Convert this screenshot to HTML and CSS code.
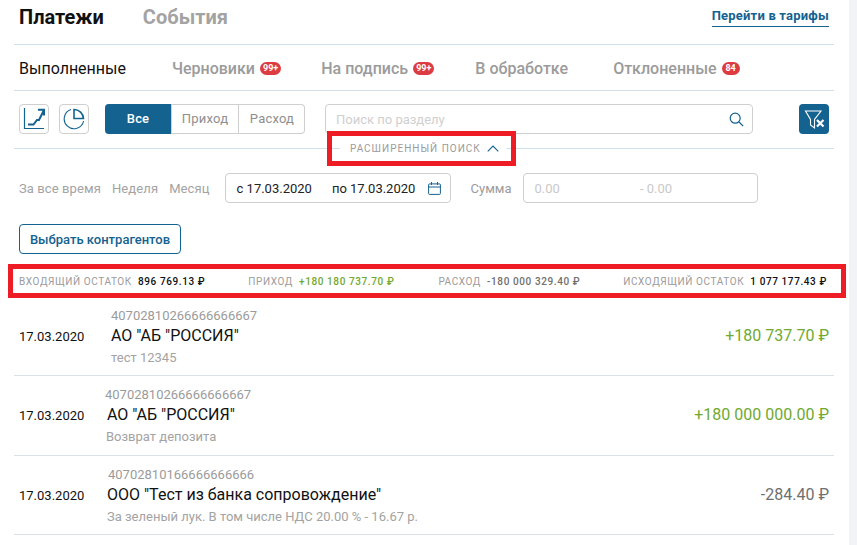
FILE: index.html
```html
<!DOCTYPE html>
<html lang="ru">
<head>
  <meta charset="UTF-8">
  <title>Платежи</title>
  <link rel="stylesheet" href="styles.css">
</head>
<body>
<div class="layout">
<div class="page">

  <div class="head">
    <div class="head-tabs">
      <span class="head-tab active">Платежи</span>
      <span class="head-tab">События</span>
    </div>
    <a class="tariff-link" href="#">Перейти в тарифы</a>
  </div>

  <div class="tabs">
    <span class="tab active">Выполненные</span>
    <span class="tab tab-drafts">Черновики <b class="badge">99+</b></span>
    <span class="tab tab-sign">На подпись <b class="badge">99+</b></span>
    <span class="tab tab-work">В обработке</span>
    <span class="tab tab-rej">Отклоненные <b class="badge">84</b></span>
  </div>

  <div class="toolbar">
    <button class="icon-btn">
      <svg width="24" height="24" viewBox="0 0 24 24" fill="none" stroke="#14628f">
        <path d="M2.5 1V21.5H22" stroke-width="1.2"/>
        <path d="M6 17.5H11.5L15 13H17L22 3" stroke-width="2"/>
        <path d="M16 2.8H22V8.5" stroke-width="2"/>
      </svg>
    </button>
    <button class="icon-btn icon-btn-pie">
      <svg width="22" height="22" viewBox="0 0 22 22" fill="none" stroke="#14628f">
        <path d="M8 1.6A9.8 9.8 0 1 0 20.6 13" stroke-width="1.1"/>
        <path d="M11 1.5V10.5H20.5A9.5 9.5 0 0 0 11 1.5Z" stroke-width="1.6"/>
      </svg>
    </button>
    <div class="switch">
      <span class="switch-item on">Все</span>
      <span class="switch-item">Приход</span>
      <span class="switch-item">Расход</span>
    </div>
    <div class="search">
      <span>Поиск по разделу</span>
      <svg width="15" height="15" viewBox="0 0 15 15" fill="none" stroke="#14628f" stroke-width="1.2">
        <circle cx="6.2" cy="6.2" r="5"/>
        <path d="M10 10L14.2 14.2"/>
      </svg>
    </div>
    <button class="filter-btn">
      <svg width="22" height="24" viewBox="0 0 22 24" fill="none" stroke="#fff">
        <path d="M2.5 4H18L11.5 12.5V21L7.5 18V12.5Z" stroke-width="1.1"/>
        <path d="M14 13L20.5 19.5M20.5 13L14 19.5" stroke-width="2.2"/>
      </svg>
    </button>
  </div>

  <div class="divider">
    <div class="adv-search">
      <div class="adv-inner">
        <span>Расширенный поиск</span>
        <svg width="12" height="7" viewBox="0 0 12 7" fill="none" stroke="#14628f" stroke-width="1.1">
          <path d="M0.7 6.4L6 1L11.3 6.4"/>
        </svg>
      </div>
    </div>
  </div>

  <div class="filters">
    <span class="period">За все время</span>
    <span class="period">Неделя</span>
    <span class="period">Месяц</span>
    <div class="dates">
      <span class="date-from">с 17.03.2020</span>
      <span>по 17.03.2020</span>
      <svg width="13" height="13" viewBox="0 0 13 13" fill="none" stroke="#14628f" stroke-width="1">
        <rect x="0.6" y="1.9" width="11.8" height="10.5" rx="1"/>
        <path d="M0.6 5H12.4M3.5 0V3M9.5 0V3"/>
      </svg>
    </div>
    <span class="sum-label">Сумма</span>
    <div class="sum">
      <span class="sum-from">0.00</span>
      <span>- 0.00</span>
    </div>
  </div>

  <button class="pick-btn">Выбрать контрагентов</button>

  <div class="totals">
    <span class="total t-in">Входящий остаток <b>896 769.13 ₽</b></span>
    <span class="total t-plus">Приход <b class="green">+180 180 737.70 ₽</b></span>
    <span class="total t-minus">Расход <b class="grey">-180 000 329.40 ₽</b></span>
    <span class="total t-out">Исходящий остаток <b>1 077 177.43 ₽</b></span>
  </div>

  <div class="row row-1">
    <span class="row-date">17.03.2020</span>
    <div class="row-info">
      <div class="acc">40702810266666666667</div>
      <div class="name">АО "АБ "РОССИЯ"</div>
      <div class="note">тест 12345</div>
    </div>
    <span class="amount green">+180 737.70 ₽</span>
  </div>

  <div class="row row-2">
    <span class="row-date">17.03.2020</span>
    <div class="row-info">
      <div class="acc">40702810266666666667</div>
      <div class="name">АО "АБ "РОССИЯ"</div>
      <div class="note">Возврат депозита</div>
    </div>
    <span class="amount green">+180 000 000.00 ₽</span>
  </div>

  <div class="row row-3">
    <span class="row-date">17.03.2020</span>
    <div class="row-info">
      <div class="acc">40702810166666666666</div>
      <div class="name">ООО "Тест из банка сопровождение"</div>
      <div class="note">За зеленый лук. В том числе НДС 20.00 % - 16.67 р.</div>
    </div>
    <span class="amount grey">-284.40 ₽</span>
  </div>

</div>
<div class="scrollbar"></div>
</div>
</body>
</html>
```

FILE: styles.css
```css
html, body {
  margin: 0;
  height: 545px;
  overflow: hidden;
  background: #fff;
}
body {
  font-family: Roboto, Arial, sans-serif;
  color: #111;
}
.layout {
  display: flex;
  height: 545px;
}
.page {
  flex: 0 0 820px;
  padding: 0 15px 0 14px;
}
.scrollbar {
  flex: 0 0 8px;
  background: #f1f3f6;
}
button {
  font-family: inherit;
  cursor: pointer;
}

.head {
  height: 44px;
  border-bottom: 1px solid #cfe0ec;
  display: flex;
  justify-content: space-between;
  padding: 0 5px;
}
.head-tabs {
  display: flex;
  gap: 39px;
}
.head-tab {
  font-size: 20px;
  font-weight: 700;
  line-height: 35px;
  color: #a3a3a3;
}
.head-tab.active {
  color: #111;
}
.tariff-link {
  align-self: flex-start;
  margin-top: 8px;
  padding-bottom: 2px;
  font-size: 13px;
  font-weight: 700;
  letter-spacing: 0.2px;
  line-height: 16px;
  color: #14628f;
  text-decoration: none;
  border-bottom: 1px solid #14628f;
}

.tabs {
  height: 44px;
  border-bottom: 1px solid #d5dfe7;
  display: flex;
  align-items: center;
  padding: 1px 5px 0;
  margin-bottom: -1px;
}
.tab {
  font-size: 16px;
  font-weight: 500;
  color: #9b9b9b;
  display: flex;
  align-items: center;
  gap: 5px;
}
.tab.active {
  color: #111;
  font-weight: 400;
}
.tab-drafts { margin-left: 46px; }
.tab-sign { margin-left: 40px; }
.tab-work { margin-left: 41px; }
.tab-rej { margin-left: 45px; }
.badge {
  min-width: 18px;
  box-sizing: border-box;
  text-align: center;
  background: #dc3c41;
  color: #fff;
  font-size: 9px;
  font-weight: 700;
  line-height: 13px;
  padding: 0 3px;
  border-radius: 7px;
}

.toolbar {
  height: 58px;
  box-sizing: border-box;
  display: flex;
  align-items: flex-start;
  padding: 14px 5px 0;
}
.icon-btn {
  width: 30px;
  height: 30px;
  padding: 0;
  background: #fff;
  border: 1px solid #cfcfcf;
  border-radius: 4px;
  display: flex;
  align-items: center;
  justify-content: center;
}
.icon-btn-pie {
  margin-left: 10px;
}
.switch {
  margin-left: 16px;
  width: 200px;
  height: 30px;
  box-sizing: border-box;
  display: flex;
  border: 1px solid #cfcfcf;
  border-left: 0;
  border-radius: 4px;
  font-size: 13px;
  letter-spacing: 0.2px;
}
.switch-item {
  flex: 0 0 67px;
  box-sizing: border-box;
  text-align: center;
  line-height: 28px;
  color: #8f8f8f;
  border-left: 1px solid #cfcfcf;
}
.switch-item.on {
  flex: 0 0 66px;
  margin: -1px 0;
  line-height: 30px;
  background: #14628f;
  color: #fff;
  border: 0;
  border-radius: 4px 0 0 4px;
  font-weight: 500;
}
.search {
  margin-left: 20px;
  width: 428px;
  height: 30px;
  box-sizing: border-box;
  border: 1px solid #cfcfcf;
  border-radius: 4px;
  display: flex;
  align-items: center;
  justify-content: space-between;
  padding: 0 8px 0 10px;
  font-size: 13px;
  color: #cfcfcf;
}
.filter-btn {
  margin-left: 46px;
  width: 30px;
  height: 30px;
  padding: 0;
  background: #14628f;
  border: 0;
  border-radius: 4px;
  display: flex;
  align-items: center;
  justify-content: center;
}

.divider {
  border-top: 1px solid #cfe0ec;
  height: 0;
  position: relative;
}
.adv-search {
  position: absolute;
  left: 313px;
  top: -18px;
  width: 189px;
  height: 35px;
  box-sizing: border-box;
  border: 5px solid #ee1c25;
  display: flex;
  align-items: center;
  padding-left: 8px;
}
.adv-inner {
  width: 167px;
  box-sizing: border-box;
  background: #fff;
  display: flex;
  align-items: center;
  gap: 6px;
  padding-left: 10px;
  line-height: 14px;
  font-size: 10px;
  letter-spacing: 1px;
  text-transform: uppercase;
  white-space: nowrap;
  color: #9b9b9b;
}

.filters {
  display: flex;
  align-items: center;
  height: 30px;
  margin-top: 24px;
  padding: 0 5px;
  font-size: 13px;
}
.period {
  color: #a3a3a3;
  margin-right: 11px;
  letter-spacing: 0.1px;
}
.dates {
  margin-left: 4px;
  width: 226px;
  height: 30px;
  box-sizing: border-box;
  border: 1px solid #cfcfcf;
  border-radius: 4px;
  display: flex;
  align-items: center;
  padding: 0 10px 0 11px;
  color: #222;
  white-space: nowrap;
}
.date-from {
  margin-right: 20px;
}
.dates svg {
  flex-shrink: 0;
  margin-left: 13px;
}
.sum-label {
  margin-left: 20px;
  color: #9b9b9b;
}
.sum {
  margin-left: 11px;
  width: 235px;
  height: 30px;
  box-sizing: border-box;
  border: 1px solid #cfcfcf;
  border-radius: 4px;
  display: flex;
  align-items: center;
  padding-left: 11px;
  color: #c9c9c9;
}
.sum-from {
  margin-right: 80px;
}

.pick-btn {
  display: block;
  margin: 21px 0 0 5px;
  width: 162px;
  height: 30px;
  background: #fff;
  border: 1px solid #14628f;
  border-radius: 4px;
  padding: 0;
  font-size: 13px;
  font-weight: 500;
  color: #14628f;
}

.totals {
  margin: 10px -12px 0 -6px;
  height: 34px;
  box-sizing: border-box;
  border: 5px solid #ee1c25;
  display: flex;
  align-items: center;
  padding-left: 6px;
  font-size: 10px;
  letter-spacing: 0.6px;
  text-transform: uppercase;
  white-space: nowrap;
  color: #9b9b9b;
}
.total b {
  font-weight: 500;
  color: #111;
  margin-left: 3px;
}
.total b.green { color: #6fa92f; }
.total b.grey { color: #6f6f6f; }
.t-plus { margin-left: 43px; }
.t-minus { margin-left: 44px; }
.t-out { margin-left: 43px; }

.row {
  display: flex;
  align-items: center;
  border-bottom: 1px solid #d8e0e8;
  padding: 0 5px;
}
.row-1 { height: 77px; }
.row-2 { height: 79px; }
.row-3 { height: 78px; }
.row-date {
  width: 87px;
  font-size: 13px;
}
.row-info {
  flex: 1;
  padding-top: 4px;
}
.acc {
  font-size: 13px;
  line-height: 15px;
  color: #9b9b9b;
}
.name {
  margin-top: 2px;
  font-size: 16px;
  line-height: 22px;
  color: #111;
}
.note {
  font-size: 13px;
  line-height: 22px;
  color: #a3a3a3;
}
.row-1 .row-info { padding-left: 5px; }
.row-2 .acc { margin-left: -1px; }
.row-2 .name { margin-left: 1px; }
.row-3 .row-info { padding-left: 1px; }
.row-3 .acc { margin-left: 1px; }
.amount {
  font-size: 16px;
  margin-top: -2px;
}
.amount.green { color: #6fa92f; }
.amount.grey { color: #6f6f6f; }
```
